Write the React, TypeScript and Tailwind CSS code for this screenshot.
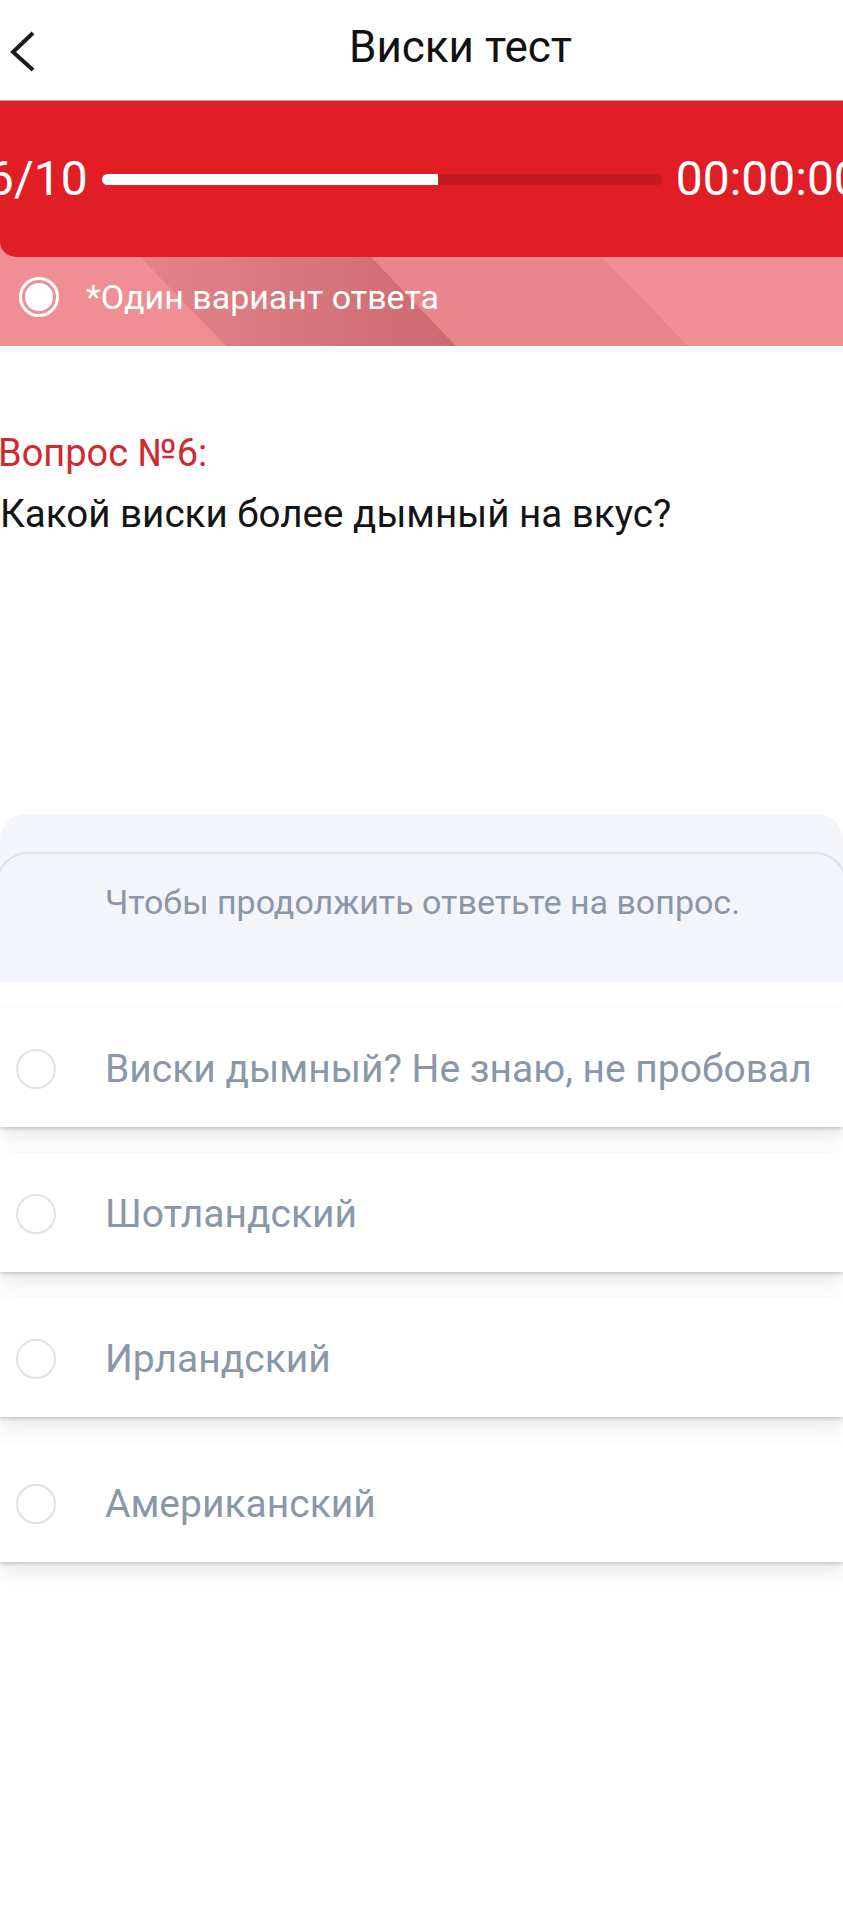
import React from "react";

const options = [
  "Виски дымный? Не знаю, не пробовал",
  "Шотландский",
  "Ирландский",
  "Американский",
];

export default function App() {
  return (
    <div className="w-[843px] h-[1920px] overflow-hidden bg-white font-['Roboto',sans-serif]">
      {/* Header */}
      <div className="flex h-[100px] items-start">
        <svg className="ml-[8px] mt-[28px]" width="30" height="48" viewBox="0 0 30 48">
          <polyline points="25,5 5,24 25,42" fill="none" stroke="#1a1a1a" strokeWidth="4" />
        </svg>
        <h1 className="ml-[311px] mt-[21px] text-[44px] leading-[52px] text-[#111]">Виски тест</h1>
      </div>

      {/* Progress block */}
      <div className="bg-[#ee8c91]">
        <div className="flex h-[157px] items-center rounded-bl-[16px] border-t border-[#c9a0a2] bg-[#e11d25] text-white">
          <span className="-ml-[13px] shrink-0 text-[48px] leading-[56px]">6/10</span>
          <div className="ml-[14px] h-[11px] w-[560px] shrink-0 rounded-full bg-[#c21b22]">
            <div className="h-full w-[336px] rounded-l-full bg-white" />
          </div>
          <span className="ml-[14px] shrink-0 text-[48px] leading-[56px]">00:00:00</span>
        </div>
        <div className="relative flex h-[89px] items-center pb-[9px] pl-[19px]">
          <svg className="absolute inset-0" width="843" height="89" viewBox="0 0 843 89">
            <defs>
              <linearGradient id="band" x1="0" y1="0" x2="1" y2="0">
                <stop offset="0" stopColor="#e3848a" />
                <stop offset="1" stopColor="#cb6a71" />
              </linearGradient>
            </defs>
            <rect x="0" y="0" width="843" height="89" fill="#ef8f94" />
            <polygon points="371,0 602,0 688,89 456,89" fill="#e8868b" />
            <polygon points="140,0 371,0 456,89 226,89" fill="url(#band)" />
          </svg>
          <div className="relative flex h-[40px] w-[40px] shrink-0 items-center justify-center rounded-full border-[3px] border-white">
            <div className="h-[28px] w-[28px] rounded-full bg-white" />
          </div>
          <span className="relative ml-[27px] text-[34px] leading-[40px] text-white">*Один вариант ответа</span>
        </div>
      </div>

      {/* Question */}
      <div className="mt-[84px]">
        <p className="-ml-[2px] text-[38px] leading-[46px] text-[#cf2a30]">Вопрос №6:</p>
        <p className="mt-[15px] text-[38.6px] leading-[46px] text-[#141414]">Какой виски более дымный на вкус?</p>
      </div>

      {/* Hint */}
      <div className="mt-[277px] flex h-[168px] flex-col rounded-t-[26px] bg-[#f3f5fa] pt-[38px]">
        <div className="-mx-[4px] flex-1 rounded-t-[32px] border-x-2 border-t-2 border-[#dde1e9] pl-[107px] pt-[28px]">
          <p className="whitespace-nowrap text-[34px] leading-[40px] text-[#8a97a9]">Чтобы продолжить ответьте на вопрос.</p>
        </div>
      </div>

      {/* Options */}
      <div className="mt-[26px] flex flex-col gap-[26px]">
        {options.map((o) => (
          <div
            key={o}
            className="flex h-[119px] items-center bg-white pl-[16px] pt-[3px] shadow-[0_2px_3px_rgba(0,0,0,0.16),0_10px_18px_rgba(0,0,0,0.09)]"
          >
            <div className="h-[40px] w-[40px] shrink-0 rounded-full border-2 border-[#dfe2e8]" />
            <span className="ml-[49px] whitespace-nowrap text-[39px] leading-[46px] text-[#8a97a9]">{o}</span>
          </div>
        ))}
      </div>
    </div>
  );
}
